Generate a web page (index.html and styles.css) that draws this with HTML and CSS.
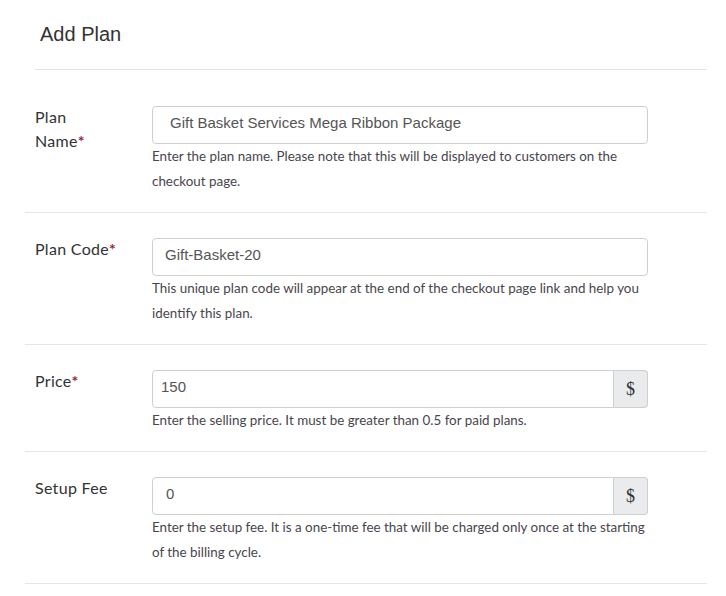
FILE: index.html
```html
<!DOCTYPE html>
<html>
<head>
<meta charset="utf-8">
<link rel="stylesheet" href="styles.css">
</head>
<body>
<div class="page">
  <div class="header"><h1 class="title">Add Plan</h1></div>
  <div class="row first">
    <label class="label">Plan Name<span class="req">*</span></label>
    <div class="field">
      <input class="input pad-a" type="text" value="Gift Basket Services Mega Ribbon Package">
      <p class="help">Enter the plan name. Please note that this will be displayed to customers on the checkout page.</p>
    </div>
  </div>
  <div class="row">
    <label class="label">Plan Code<span class="req">*</span></label>
    <div class="field">
      <input class="input pad-b" type="text" value="Gift-Basket-20">
      <p class="help">This unique plan code will appear at the end of the checkout page link and help you identify this plan.</p>
    </div>
  </div>
  <div class="row">
    <label class="label">Price<span class="req">*</span></label>
    <div class="field">
      <div class="group">
        <input class="input grouped pad-c" type="text" value="150">
        <span class="addon">$</span>
      </div>
      <p class="help">Enter the selling price. It must be greater than 0.5 for paid plans.</p>
    </div>
  </div>
  <div class="row">
    <label class="label">Setup Fee</label>
    <div class="field">
      <div class="group">
        <input class="input grouped pad-d" type="text" value="0">
        <span class="addon">$</span>
      </div>
      <p class="help">Enter the setup fee. It is a one-time fee that will be charged only once at the starting of the billing cycle.</p>
    </div>
  </div>
</div>
</body>
</html>
```
FILE: styles.css
```css
html, body {
  margin: 0;
  padding: 0;
  background: #fff;
}
.page {
  width: 682px;
  margin-left: 25px;
}
.header {
  margin-left: 10px;
  height: 69px;
  border-bottom: 1px solid #e3e3e3;
  display: flex;
  align-items: center;
}
.title {
  margin: 0 0 2px 5px;
  font-family: "Liberation Sans", Arial, sans-serif;
  font-size: 20px;
  font-weight: normal;
  line-height: 24px;
  color: #333;
}
.row {
  display: grid;
  grid-template-columns: 117px 496px;
  padding: 25px 0 18px 10px;
  border-bottom: 1px solid #e6e6e6;
}
.row.first {
  padding-top: 36px;
}
.label {
  font-family: Lato, "Open Sans", sans-serif;
  font-size: 16px;
  letter-spacing: 0.3px;
  line-height: 24px;
  color: #333;
  margin-top: -1px;
  padding-right: 35px;
}
.req {
  color: #9e1f32;
  font-weight: bold;
}
.field {
  display: flex;
  flex-direction: column;
}
.input {
  box-sizing: border-box;
  width: 100%;
  height: 38px;
  margin: 0;
  border: 1px solid #cfcfcf;
  border-radius: 4px;
  padding: 0 12px 5px;
  font-family: "Liberation Sans", Arial, sans-serif;
  font-size: 15px;
  color: #555;
  background: #fff;
  outline: none;
}
.pad-a { padding-left: 17px; }
.pad-b { padding-left: 12px; }
.pad-c { padding-left: 8px; }
.pad-d { padding-left: 13px; }
.group {
  display: flex;
}
.grouped {
  flex: 1;
  border-radius: 4px 0 0 4px;
}
.addon {
  box-sizing: border-box;
  width: 34px;
  height: 38px;
  display: flex;
  align-items: center;
  justify-content: center;
  background: #e9ebec;
  border: 1px solid #cfcfcf;
  border-left: none;
  border-radius: 0 4px 4px 0;
  font-family: "Liberation Serif", "Times New Roman", serif;
  font-size: 18px;
  color: #333;
}
.help {
  margin: 0;
  width: 504px;
  font-family: Lato, "Open Sans", sans-serif;
  font-size: 13.4px;
  line-height: 25px;
  color: #48454d;
}
```
